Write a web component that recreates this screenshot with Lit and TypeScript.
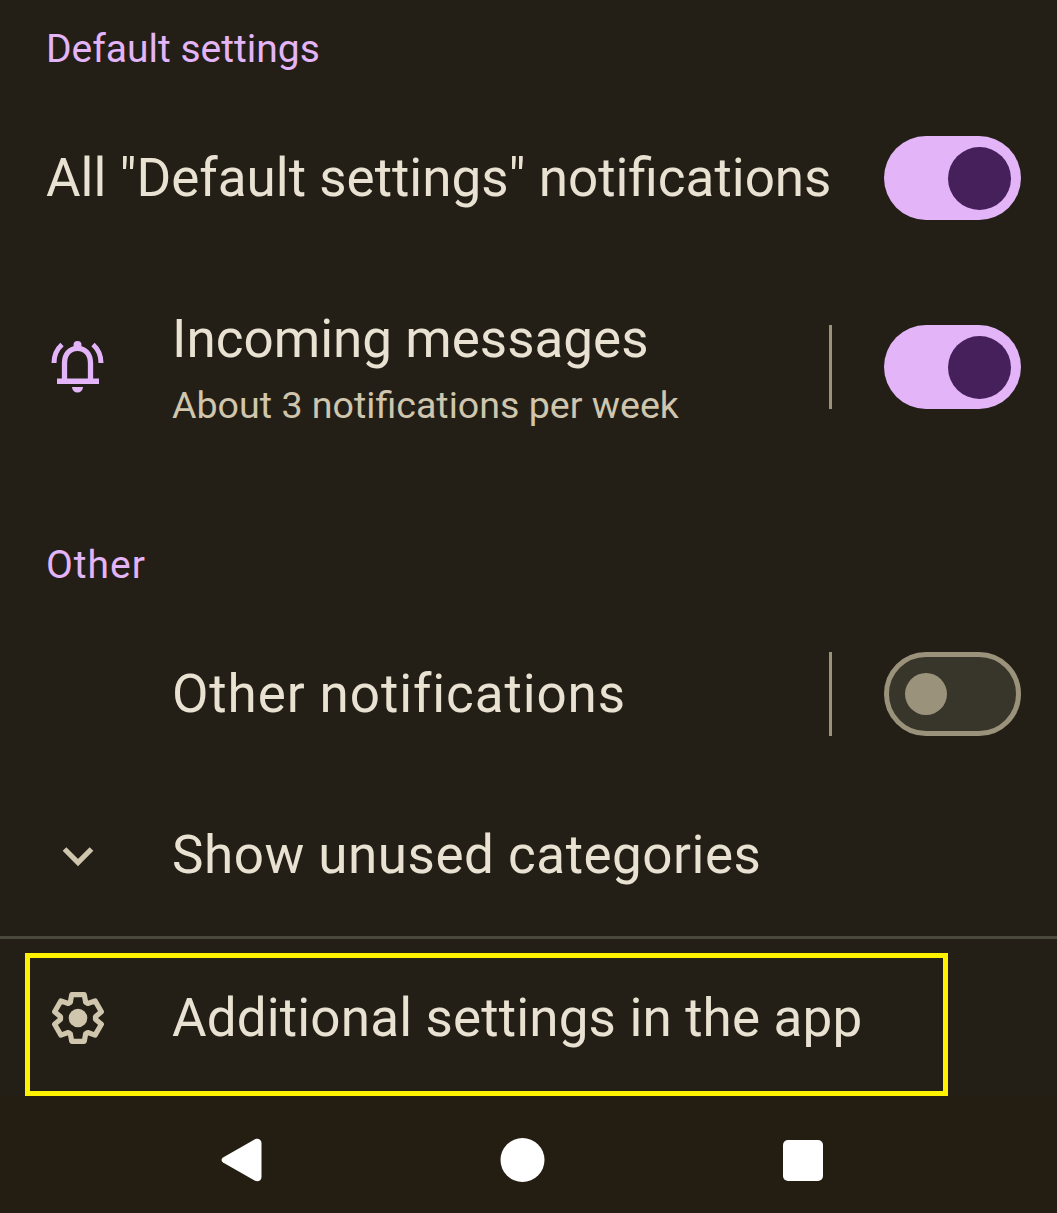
import { LitElement, html, css, svg } from "lit";
import { customElement } from "lit/decorators.js";

function gearPath(): string {
  const pts: string[] = [];
  const c = 27;
  const p = (r: number, deg: number) => {
    const a = (deg * Math.PI) / 180;
    return `${(c + r * Math.cos(a)).toFixed(2)} ${(c + r * Math.sin(a)).toFixed(2)}`;
  };
  for (let k = 0; k < 6; k++) {
    const a = -90 + 60 * k;
    pts.push(p(17.5, a - 26), p(24.2, a - 15), p(24.2, a + 15), p(17.5, a + 26));
  }
  return "M" + pts.join("L") + "Z";
}

@customElement("app-root")
export class AppRoot extends LitElement {
  static styles = css`
    :host {
      display: block;
      width: 1057px;
      height: 1213px;
      background: #231f17;
      font-family: Roboto, "Noto Sans", sans-serif;
      overflow: hidden;
    }
    .label {
      height: 98px;
      padding-left: 46px;
      display: flex;
      align-items: center;
      color: #e3b5f8;
      font-size: 39px;
    }
    .label.short { letter-spacing: 1px; }
    .row {
      display: flex;
      align-items: center;
      padding: 0 36px 0 51px;
      color: #e9e2d2;
      font-size: 53px;
      white-space: nowrap;
    }
    .row.plain { padding-left: 46px; height: 160px; justify-content: space-between; }
    .row.tall { height: 218px; margin-bottom: 40px; }
    .row.mid { height: 160px; letter-spacing: 0.9px; }
    .row.more { height: 162px; letter-spacing: 0.5px; }
    .icon { width: 54px; height: 54px; flex: none; margin-right: 67px; display: block; }
    .indent { width: 54px; flex: none; margin-right: 67px; }
    .body { flex: 1; min-width: 0; }
    .sub { color: #cfc6ad; font-size: 37.6px; margin-top: 13px; }
    .title { line-height: 62px; }
    .sep { width: 3px; height: 84px; background: #9b927b; margin-right: 52px; flex: none; }
    .toggle {
      width: 137px;
      height: 84px;
      border-radius: 42px;
      box-sizing: border-box;
      display: flex;
      align-items: center;
      flex: none;
    }
    .toggle.on { background: #e3b5f8; justify-content: flex-end; padding-right: 10px; }
    .toggle.on i { width: 63px; height: 63px; border-radius: 50%; background: #45205a; display: block; }
    .toggle.off { background: #38352b; border: 5px solid #9b927b; padding-left: 16px; }
    .toggle.off i { width: 42px; height: 42px; border-radius: 50%; background: #9b927b; display: block; }
    .divider { height: 3px; background: #4a473c; }
    .box {
      margin: 14px 0 0 25px;
      width: 923px;
      height: 143px;
      box-sizing: border-box;
      border: 5px solid #fff200;
      padding: 0 0 14px 21px;
      display: flex;
      align-items: center;
      color: #e9e2d2;
      font-size: 53px;
      letter-spacing: 0.15px;
      white-space: nowrap;
    }
    .nav {
      height: 117px;
      background: #231e11;
      box-sizing: border-box;
      padding: 11px 0 0 221px;
      display: flex;
      align-items: center;
      gap: 238px;
    }
    .nav svg { display: block; flex: none; }
  `;

  private toggle(on: boolean) {
    return html`<div class="toggle ${on ? "on" : "off"}"><i></i></div>`;
  }

  render() {
    return html`
      <div class="label">Default settings</div>
      <div class="row plain">
        <span>All "Default settings" notifications</span>
        ${this.toggle(true)}
      </div>
      <div class="row tall">
        <svg class="icon" viewBox="0 0 54 54" fill="none">
          ${svg`
            <path d="M3 23C3 16 6 9 11 4.5M50 23C50 16 47 9 42 4.5" stroke="#e3b5f8" stroke-width="5"/>
            <path d="M13.5 41V23C13.5 14 19 8.3 26.5 8.3S39.5 14 39.5 23V41" stroke="#e3b5f8" stroke-width="5.3"/>
            <rect x="6" y="38.5" width="42" height="5.5" fill="#e3b5f8"/>
            <circle cx="26.5" cy="5" r="4" fill="#e3b5f8"/>
            <path d="M21 47H32A5.5 5.5 0 0 1 21 47Z" fill="#e3b5f8"/>
          `}
        </svg>
        <div class="body">
          <div class="title">Incoming messages</div>
          <div class="sub">About 3 notifications per week</div>
        </div>
        <div class="sep"></div>
        ${this.toggle(true)}
      </div>
      <div class="label short">Other</div>
      <div class="row mid">
        <div class="indent"></div>
        <div class="body">Other notifications</div>
        <div class="sep"></div>
        ${this.toggle(false)}
      </div>
      <div class="row more">
        <svg class="icon" viewBox="0 0 54 54" fill="none">
          ${svg`<path d="M13.5 21L27 34.5L40.5 21" stroke="#cfc6ad" stroke-width="5.2"/>`}
        </svg>
        <div class="body">Show unused categories</div>
      </div>
      <div class="divider"></div>
      <div class="box">
        <svg class="icon" viewBox="0 0 54 54" fill="none">
          ${svg`
            <path d=${gearPath()} stroke="#cfc6ad" stroke-width="5.2" stroke-linejoin="round"/>
            <circle cx="27" cy="27" r="9.3" fill="#cfc6ad"/>
          `}
        </svg>
        <span>Additional settings in the app</span>
      </div>
      <div class="nav">
        <svg width="41" height="44" viewBox="0 0 41 44" fill="#fff">
          ${svg`<path d="M2 19.5L34 1.2C37 -0.2 40.5 1.5 40.5 5V39C40.5 42.5 37 44.2 34 42.8L2 24.5C0 23 0 21 2 19.5Z"/>`}
        </svg>
        <svg width="45" height="44" viewBox="0 0 45 44" fill="#fff">
          ${svg`<ellipse cx="22.5" cy="22" rx="22" ry="22"/>`}
        </svg>
        <svg width="40" height="41" viewBox="0 0 40 41" fill="#fff">
          ${svg`<rect width="40" height="41" rx="5"/>`}
        </svg>
      </div>
    `;
  }
}
